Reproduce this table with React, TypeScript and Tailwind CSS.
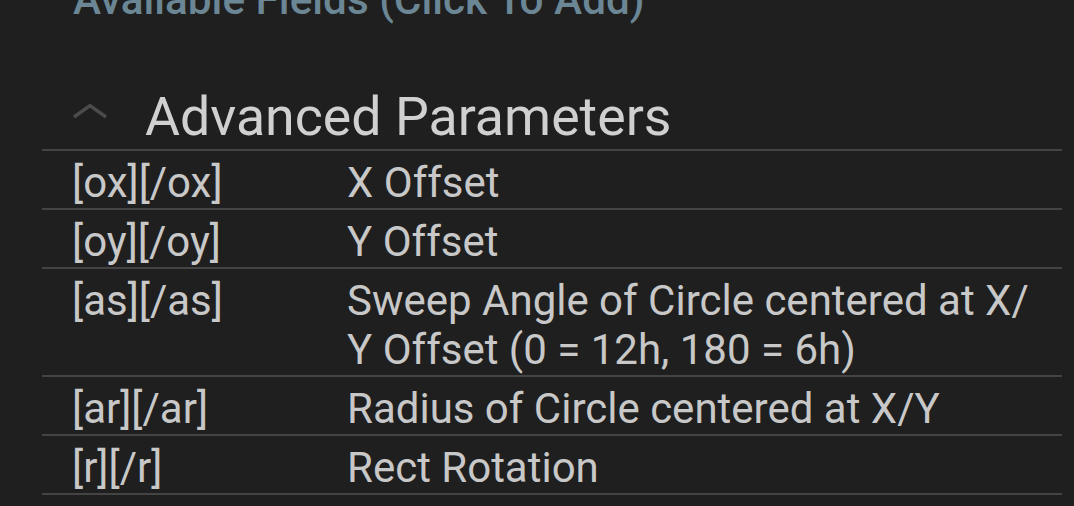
const rows: { tag: string; label: string }[] = [
  { tag: "[ox][/ox]", label: "X Offset" },
  { tag: "[oy][/oy]", label: "Y Offset" },
  { tag: "[as][/as]", label: "Sweep Angle of Circle centered at X/ Y Offset (0 = 12h, 180 = 6h)" },
  { tag: "[ar][/ar]", label: "Radius of Circle centered at X/Y" },
  { tag: "[r][/r]", label: "Rect Rotation" },
  { tag: "[s][/s]", label: "Size" },
];

function ChevronUp() {
  return (
    <svg width="36" height="16" viewBox="0 0 36 16" className="shrink-0">
      <path d="M2 14 L18 2.5 L34 14" fill="none" stroke="#4b4b4b" strokeWidth="3.4" />
    </svg>
  );
}

export default function App() {
  return (
    <div className="h-[506px] w-[1074px] overflow-hidden bg-[#1f1f1f] font-['Roboto',sans-serif]">
      <div className="pl-[73px] -mt-[21px] text-[42.3px] leading-none font-medium text-[#6b8694] whitespace-nowrap">
        Available Fields (Click To Add)
      </div>

      <div className="mt-[66px] ml-[42px] w-[1020px]">
        <div className="flex items-center h-[60px] pl-[30px] mb-[2px]">
          <div className="w-[73px] flex items-center -mt-[12px]">
            <ChevronUp />
          </div>
          <span className="text-[53.7px] leading-[60px] text-[#d0d0d0] whitespace-nowrap">Advanced Parameters</span>
        </div>

        {rows.map((r) => (
          <div key={r.tag} className="flex border-t-2 border-[#444444] pt-[7px] pb-[1px] text-[42px] leading-[49px] text-[#c8c8c8]">
            <div className="w-[305px] shrink-0 pl-[30px]">{r.tag}</div>
            <div className="w-[690px]">{r.label}</div>
          </div>
        ))}
      </div>
    </div>
  );
}
